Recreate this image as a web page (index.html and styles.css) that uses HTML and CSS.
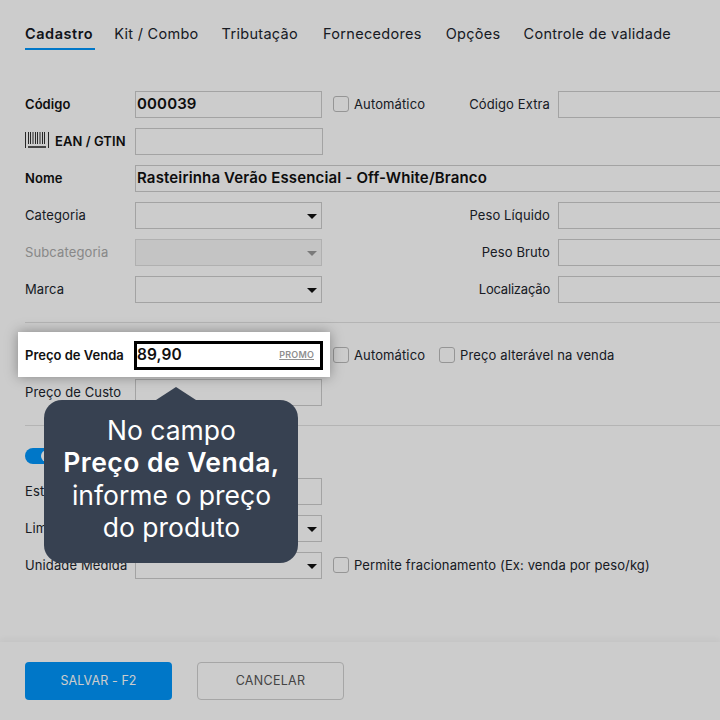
FILE: index.html
```html
<!DOCTYPE html>
<html lang="pt-BR">
<head>
<meta charset="utf-8">
<title>Cadastro de produto</title>
<link rel="stylesheet" href="styles.css">
</head>
<body>
<div class="page">
  <nav class="tabs">
    <span class="tab active">Cadastro</span>
    <span class="tab">Kit / Combo</span>
    <span class="tab">Tributação</span>
    <span class="tab">Fornecedores</span>
    <span class="tab">Opções</span>
    <span class="tab">Controle de validade</span>
  </nav>

  <main class="form">
    <div class="row">
      <label class="lbl strong">Código</label>
      <div class="field value">000039</div>
      <div class="mid">
        <span class="check"><i class="box"></i>Automático</span>
        <span>Código Extra</span>
      </div>
      <div class="field"></div>
    </div>
    <div class="row">
      <label class="lbl strong ean">
        <svg class="barcode" width="24" height="17" viewBox="0 0 24 17" aria-hidden="true">
          <path d="M.5 0v16M3.5 0v12M5.5 0v12M8 0v12M10.5 0v12M12.5 0v12M15 0v12M17.5 0v12M19.5 0v12M23.5 0v16" stroke="#333" fill="none"/>
          <path d="M3 14h18v2H3z" fill="#555"/>
        </svg>
        EAN / GTIN
      </label>
      <div class="field wide1"></div>
    </div>
    <div class="row">
      <label class="lbl strong">Nome</label>
      <div class="field value span">Rasteirinha Verão Essencial - Off-White/Branco</div>
    </div>
    <div class="row">
      <label class="lbl">Categoria</label>
      <div class="field select"></div>
      <div class="mid end">Peso Líquido</div>
      <div class="field"></div>
    </div>
    <div class="row">
      <label class="lbl disabled">Subcategoria</label>
      <div class="field select off"></div>
      <div class="mid end">Peso Bruto</div>
      <div class="field"></div>
    </div>
    <div class="row">
      <label class="lbl">Marca</label>
      <div class="field select"></div>
      <div class="mid end tight">Localização</div>
      <div class="field"></div>
    </div>

    <hr class="rule first">

    <div class="price-row">
      <div class="spot">
        <label class="spot-lbl">Preço de Venda</label>
        <div class="price"><b>89,90</b><u>PROMO</u></div>
      </div>
      <span class="check"><i class="box"></i>Automático</span>
      <span class="check second"><i class="box"></i>Preço alterável na venda</span>
    </div>
    <div class="row cost">
      <label class="lbl">Preço de Custo</label>
      <div class="field"></div>
    </div>

    <hr class="rule">

    <div class="toggle-row"><span class="toggle"><i></i></span></div>

    <div class="row">
      <label class="lbl">Estoque</label>
      <div class="field"></div>
    </div>
    <div class="row">
      <label class="lbl">Limite</label>
      <div class="field select"></div>
    </div>
    <div class="row">
      <label class="lbl">Unidade Medida</label>
      <div class="field select"></div>
      <span class="check mid-check"><i class="box"></i>Permite fracionamento (Ex: venda por peso/kg)</span>
    </div>
  </main>

  <footer class="footer">
    <button class="btn primary">SALVAR - F2</button>
    <button class="btn ghost">CANCELAR</button>
  </footer>

  <div class="overlay"></div>

  <div class="tip">No campo<br><b>Preço de Venda,</b><br>informe o preço<br>do produto</div>
</div>
</body>
</html>
```

FILE: styles.css
```css
* { box-sizing: border-box; }
html, body { margin: 0; height: 100%; }
body { font-family: Inter, "Liberation Sans", sans-serif; color: #20242c; background: #fff; overflow: hidden; }
.page { position: relative; width: 720px; height: 720px; overflow: hidden; display: flex; flex-direction: column; }

.tabs { display: flex; gap: 24px; padding: 23px 0 0 25px; font-size: 14.5px; letter-spacing: .3px; }
.tab { height: 27px; line-height: 21px; white-space: nowrap; }
.tab.active { font-weight: 600; border-bottom: 2px solid #0095fa; color: #14181f; letter-spacing: .55px; margin-right: -5px; padding-right: 2px; }
.tab:nth-child(3) { margin-left: -1px; }
.tab:nth-child(4) { margin-left: 1px; }
.tab:nth-child(6) { margin-left: -1px; }

.form { padding: 41px 0 0 25px; flex: 1; font-size: 13px; letter-spacing: .12px; }
.row { display: grid; grid-template-columns: 110px 187px 236px 200px; align-items: center; height: 27px; margin-bottom: 10px; white-space: nowrap; }
.lbl { display: block; padding-bottom: 2px; }
.strong { font-weight: 600; color: #111; letter-spacing: .05px; }
.disabled { color: #aaa; }
.ean { display: flex; align-items: center; gap: 6px; }
.barcode { flex: none; }

.field { height: 27px; border: 1.5px solid #ccc; background: #fff; position: relative; }
.value { font-size: 15px; font-weight: 600; color: #111; padding-left: 1px; line-height: 24px; letter-spacing: .15px; }
.wide1 { width: 188px; }
.span { grid-column: 2 / 5; width: 640px; }
.select::after { content: ""; position: absolute; right: 4px; top: 10.5px; border-left: 5px solid transparent; border-right: 5px solid transparent; border-top: 5.5px solid #111; }
.off { background: #f6f6f6; border-color: #ddd; }
.off::after { border-top-color: #999; }

.mid { display: flex; justify-content: space-between; align-items: center; padding: 0 8px 2px 11px; }
.end { justify-content: flex-end; }
.tight { letter-spacing: -.2px; }
.check { display: inline-flex; align-items: center; gap: 5px; white-space: nowrap; }
.box { display: block; width: 16px; height: 16px; border: 1.5px solid #bbb; border-radius: 3px; background: #fff; }
.mid-check { margin-left: 11px; margin-bottom: 2px; grid-column: 3 / 5; }

.rule { border: 0; border-top: 1px solid #e2e2e2; margin: 0; }
.rule.first { margin: 19px 0 9px; }

.price-row { display: flex; align-items: center; height: 45px; margin-left: -7px; }
.spot { position: relative; z-index: 20; display: flex; align-items: center; width: 312px; height: 45px; background: #fff; padding: 2px 7px 0; box-shadow: 0 0 12px rgba(0,0,0,.35); font-weight: 600; color: #111; letter-spacing: 0; }
.spot-lbl { width: 109px; flex: none; padding-bottom: 2px; }
.price { flex: none; width: 189px; height: 29px; border: 3px solid #000; display: flex; align-items: center; justify-content: space-between; padding: 0 6px 2px 0; }
.price b { font-size: 15.5px; font-weight: 600; letter-spacing: .1px; }
.price u { font-size: 9px; font-weight: 600; color: #8f8f8f; letter-spacing: .2px; }
.price-row > .check { margin-left: 3px; margin-top: 1px; }
.price-row > .check.second { margin-left: 14px; }
.cost { margin: 2px 0 0; }
.cost + .rule { margin: 19px 0 0; }

.toggle-row { height: 16px; margin: 22px 0 14px; }
.toggle { display: block; width: 27px; height: 16px; border-radius: 8px; background: #0095fa; position: relative; }
.toggle i { position: absolute; right: -1px; top: 2px; width: 12px; height: 12px; border-radius: 50%; background: #fff; }

.footer { position: absolute; left: 0; right: 0; bottom: 0; height: 78px; display: flex; gap: 25px; padding: 20px 25px; background: #fff; box-shadow: 0 -3px 6px rgba(0,0,0,.04); }
.btn { width: 147px; height: 38px; border-radius: 4px; padding: 0 0 2px; font: 400 12.5px Inter, sans-serif; letter-spacing: .3px; }
.primary { background: #0095fa; color: #fff; border: 0; letter-spacing: .1px; }
.ghost { background: #fff; color: #555; border: 1.5px solid #d0d0d0; }

.overlay { position: absolute; inset: 0; z-index: 10; background: rgba(0,0,0,.2); }

.tip { position: absolute; z-index: 30; left: 44px; top: 400px; width: 254px; height: 163px; padding: 14px 0 0 1px; border-radius: 18px; background: #374151; color: #fff; font-size: 26.5px; line-height: 32.3px; text-align: center; }
.tip b { font-weight: 600; letter-spacing: .45px; }
.tip::before { content: ""; position: absolute; left: 112px; top: -13px; border-left: 20px solid transparent; border-right: 20px solid transparent; border-bottom: 13px solid #374151; }
```
